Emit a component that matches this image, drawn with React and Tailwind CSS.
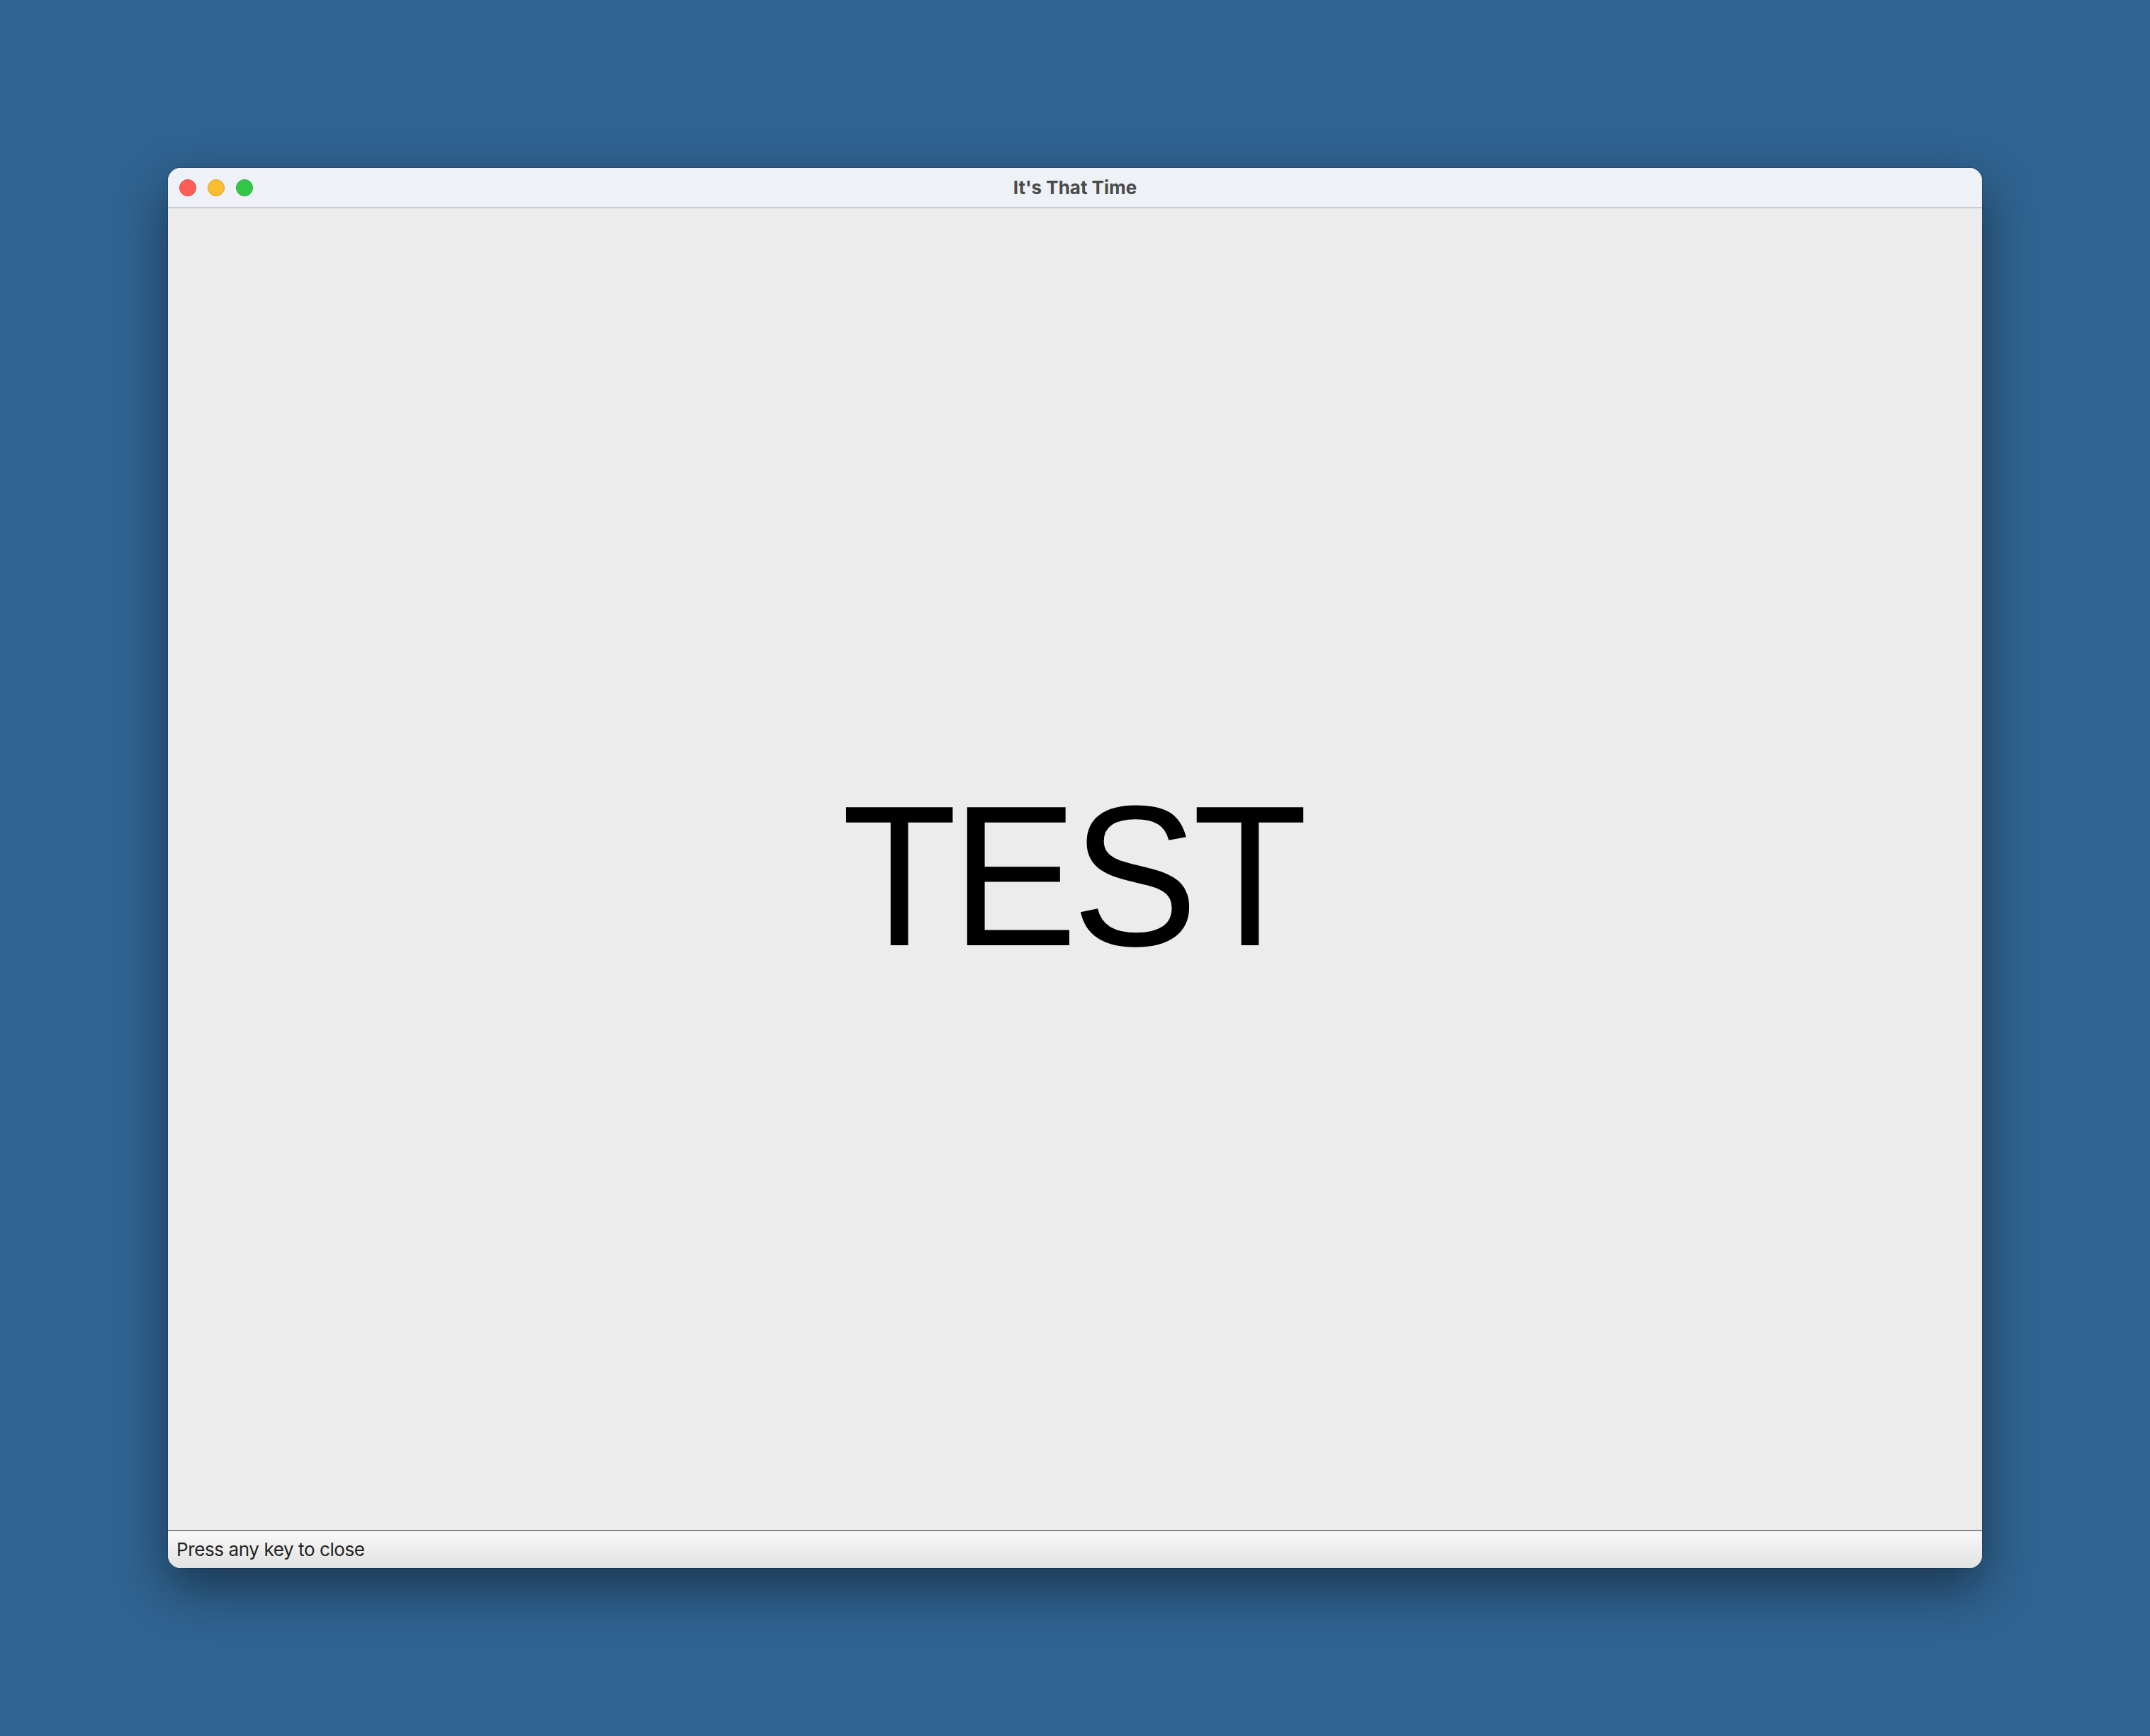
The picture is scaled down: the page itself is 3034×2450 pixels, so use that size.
export default function App() {
  return (
    <div className="w-full h-[2450px] bg-[#2f6390] flex items-center justify-center">
      <div className="w-[2560px] h-[1976px] rounded-[18px] overflow-hidden flex flex-col bg-[#ececec] shadow-[0_28px_70px_rgba(0,0,0,0.45),0_0_0_1px_rgba(0,0,0,0.15)]">
        {/* Title bar */}
        <div className="relative h-[57px] shrink-0 bg-[#eef1f6] border-b-2 border-[#c9cbcf] flex items-center px-[16px]">
          <div className="flex items-center gap-[16px]">
            <div className="w-[24px] h-[24px] rounded-full bg-[#fd5f57] border border-[#e0463f]" />
            <div className="w-[24px] h-[24px] rounded-full bg-[#fcbc2f] border border-[#dea226]" />
            <div className="w-[24px] h-[24px] rounded-full bg-[#33c748] border border-[#24ad33]" />
          </div>
          <div className="absolute inset-0 flex items-center justify-center pointer-events-none">
            <span className="text-[26px] font-bold text-[#4a4a4a] leading-none pt-[1px]" style={{ fontFamily: "Inter, 'Noto Sans', sans-serif" }}>
              It's That Time
            </span>
          </div>
        </div>
        {/* Content */}
        <div className="flex-1 flex items-center justify-center pt-[20px]">
          <span
            className="inline-block text-[283px] leading-none text-black tracking-[-8px] pr-[8px] scale-x-[0.94]"
            style={{ fontFamily: "'Liberation Sans', Arial, sans-serif" }}
          >
            TEST
          </span>
        </div>
        {/* Status bar */}
        <div className="h-[54px] shrink-0 border-t-2 border-[#8c8c8c] bg-gradient-to-b from-[#f9f9f9] to-[#e1e1e1] flex items-center px-[12px]">
          <span className="text-[26px] text-[#222222] leading-none tracking-[-0.4px]" style={{ fontFamily: "Inter, 'Noto Sans', sans-serif" }}>
            Press any key to close
          </span>
        </div>
      </div>
    </div>
  );
}
